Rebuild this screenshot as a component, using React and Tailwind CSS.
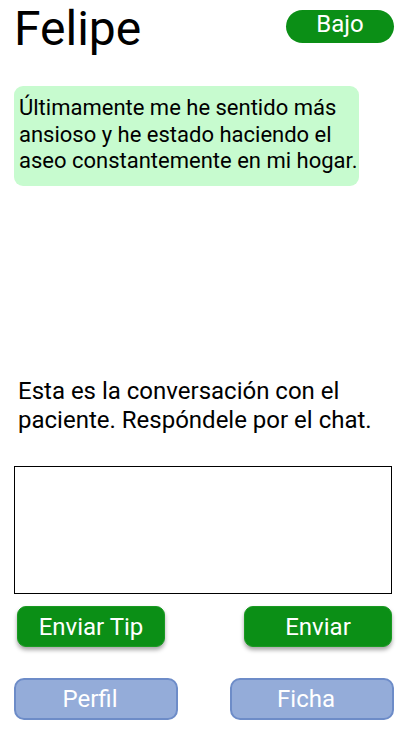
const font = { fontFamily: 'Roboto, "Noto Sans", sans-serif' };

function GreenButton({ children }) {
  return (
    <button className="h-[41px] w-[148px] rounded-[9px] border border-[#1a9a22] bg-[#0b8f16] text-[24px] leading-none text-white shadow-[0_3px_4px_rgba(0,0,0,0.35)]">
      {children}
    </button>
  );
}

function BlueButton({ children }) {
  return (
    <button className="h-[42px] w-[164px] rounded-[10px] border-2 border-[#6d8cc8] bg-[#94acd9] pr-[12px] text-[24px] leading-none text-white">
      {children}
    </button>
  );
}

export default function App() {
  return (
    <div className="flex h-[731px] w-[411px] flex-col bg-white text-black" style={font}>
      <header className="flex items-start justify-between">
        <h1 className="ml-[14px] mt-[5px] text-[48px] leading-none font-normal">Felipe</h1>
        <span className="mr-[17px] mt-[10px] flex h-[33px] w-[108px] items-center justify-center rounded-full bg-[#0b8f16] pb-[6px] text-[24px] text-white">
          Bajo
        </span>
      </header>

      <div className="ml-[14px] mt-[33px] h-[100px] w-[345px] rounded-[9px] bg-[#c7fbcf] pl-[5px] pt-[9px] text-[22px] leading-[26.5px]">
        <span className="block whitespace-nowrap">Últimamente me he sentido más</span>
        <span className="block whitespace-nowrap">ansioso y he estado haciendo el</span>
        <span className="block whitespace-nowrap">aseo constantemente en mi hogar.</span>
      </div>

      <p className="ml-[18px] mt-[191px] h-[58px] text-[24px] leading-[29px]">
        Esta es la conversación con el
        <br />
        paciente. Respóndele por el chat.
      </p>

      <textarea className="ml-[14px] mt-[31px] h-[128px] w-[378px] resize-none border border-black outline-none" />

      <div className="mt-[12px] flex justify-between pl-[17px] pr-[19px]">
        <GreenButton>Enviar Tip</GreenButton>
        <GreenButton>Enviar</GreenButton>
      </div>

      <div className="mt-[31px] flex justify-between pl-[14px] pr-[17px]">
        <BlueButton>Perfil</BlueButton>
        <BlueButton>Ficha</BlueButton>
      </div>
    </div>
  );
}
